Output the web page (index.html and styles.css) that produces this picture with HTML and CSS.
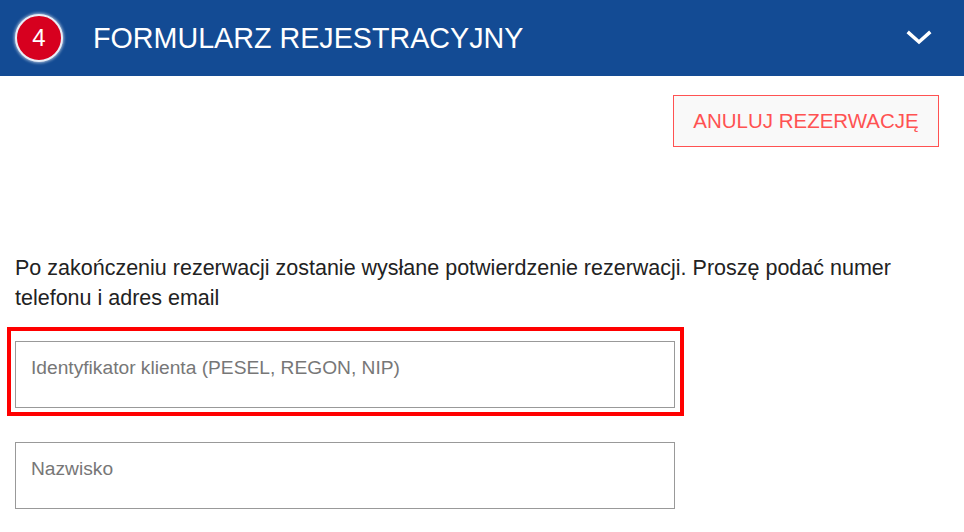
FILE: index.html
```html
<!DOCTYPE html>
<html lang="pl">
<head>
  <meta charset="UTF-8" />
  <meta name="viewport" content="width=device-width, initial-scale=1.0"/>
  <title>Formularz rejestracyjny</title>
  <link rel="stylesheet" href="styles.css">
</head>
<body>
  <header class="step-header">
    <span class="step-number">4</span>
    <h2 class="step-title">FORMULARZ REJESTRACYJNY</h2>
    <button class="toggle" aria-label="Zwiń">
      <svg width="26" height="16" viewBox="0 0 26 16">
        <polyline points="3,3 13,12 23,3" fill="none" stroke="#fff" stroke-width="3.5" stroke-linecap="square"/>
      </svg>
    </button>
  </header>

  <main class="content">
    <div class="actions">
      <button class="cancel-btn">ANULUJ REZERWACJĘ</button>
    </div>

    <p class="info">Po zakończeniu rezerwacji zostanie wysłane potwierdzenie rezerwacji. Proszę podać numer telefonu i adres email</p>

    <div class="field field-highlight">
      <input type="text" class="field-input" placeholder="Identyfikator klienta (PESEL, REGON, NIP)" />
    </div>

    <div class="field">
      <input type="text" class="field-input" placeholder="Nazwisko" />
    </div>
  </main>
</body>
</html>
```

FILE: styles.css
```css
:root {
  --header-bg: #134b94;
  --badge-red: #d7001f;
  --cancel-red: #ff5252;
  --text-color: #222;
  --input-border: #999;
}

* {
  margin: 0;
  padding: 0;
  box-sizing: border-box;
  font-family: 'Liberation Sans', Arial, sans-serif;
}

body {
  background: #fff;
  color: var(--text-color);
}

.step-header {
  display: flex;
  align-items: center;
  height: 76px;
  padding: 0 32px 0 15px;
  background: var(--header-bg);
  color: #fff;
}

.step-number {
  display: flex;
  align-items: center;
  justify-content: center;
  width: 48px;
  height: 48px;
  border-radius: 50%;
  background: var(--badge-red);
  border: 2px solid #e8eef8;
  box-shadow: 0 0 3px 1px rgba(255, 255, 255, 0.6);
  font-size: 24px;
  color: #fff;
}

.step-title {
  flex: 1;
  margin-left: 30px;
  font-size: 28.7px;
  font-weight: 400;
}

.toggle {
  display: flex;
  background: none;
  border: none;
  cursor: pointer;
}

.content {
  padding: 0 15px;
}

.actions {
  display: flex;
  justify-content: flex-end;
  padding: 19px 10px 0 0;
}

.cancel-btn {
  width: 266px;
  height: 52px;
  border: 1px solid var(--cancel-red);
  background: #f9f9f9;
  color: var(--cancel-red);
  font-size: 20.5px;
  cursor: pointer;
}

.info {
  margin-top: 106px;
  font-size: 21.5px;
  line-height: 30px;
}

.field {
  width: 660px;
}

.field-highlight {
  position: relative;
  margin-top: 28px;
}

.field-highlight::after {
  content: "";
  position: absolute;
  top: -14px;
  left: -8px;
  right: -9px;
  bottom: -8px;
  border: 4px solid #f00;
  pointer-events: none;
}

.field + .field {
  margin-top: 34px;
}

.field-input {
  display: block;
  width: 100%;
  height: 67px;
  padding: 0 15px 14px;
  border: 1px solid var(--input-border);
  outline: none;
  font-size: 19.2px;
  color: var(--text-color);
}

.field-input::placeholder {
  color: #777;
}
```
